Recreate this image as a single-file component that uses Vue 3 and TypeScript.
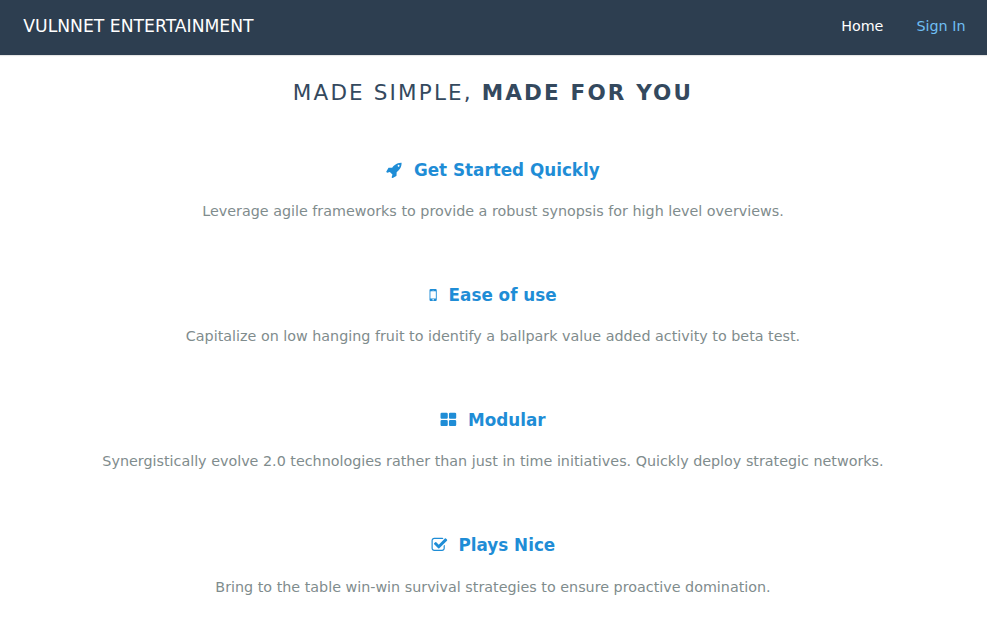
<script setup lang="ts">
interface Feature {
  title: string
  text: string
  viewBox: string
  width: number
  path: string
}

const features: Feature[] = [
  {
    title: 'Get Started Quickly',
    text: 'Leverage agile frameworks to provide a robust synopsis for high level overviews.',
    viewBox: '64 0 1664 1792',
    width: 15.7,
    path: 'M1440 448q0-40-28-68t-68-28-68 28-28 68 28 68 68 28 68-28 28-68zm224-288q0 249-75.5 430.5t-253.5 360.5q-81 80-195 176l-20 379q-2 16-16 26l-384 224q-7 4-16 4-12 0-23-9l-64-64q-13-14-8-32l85-276-281-281-276 85q-3 1-9 1-14 0-23-9l-64-64q-17-19-5-39l224-384q10-14 26-16l379-20q96-114 176-195 188-187 358-258t431-71q14 0 24 9.5t10 22.5z',
  },
  {
    title: 'Ease of use',
    text: 'Capitalize on low hanging fruit to identify a ballpark value added activity to beta test.',
    viewBox: '512 0 768 1792',
    width: 7.24,
    path: 'M976 1408q0-33-23.500-56.500t-56.500-23.500-56.500 23.500-23.500 56.500 23.500 56.500 56.500 23.500 56.500-23.500 23.500-56.500zm208-160v-704q0-13-9.500-22.500t-22.500-9.500h-512q-13 0-22.500 9.500t-9.500 22.500v704q0 13 9.500 22.500t22.500 9.500h512q13 0 22.500-9.500t9.500-22.500zm-192-848q0-16-16-16h-160q-16 0-16 16t16 16h160q16 0 16-16zm288-16v1024q0 52-38 90t-90 38h-512q-52 0-90-38t-38-90v-1024q0-52 38-90t90-38h512q52 0 90 38t38 90z',
  },
  {
    title: 'Modular',
    text: 'Synergistically evolve 2.0 technologies rather than just in time initiatives. Quickly deploy strategic networks.',
    viewBox: '64 0 1664 1792',
    width: 15.7,
    path: 'M832 1024v384q0 52-38 90t-90 38h-512q-52 0-90-38t-38-90v-384q0-52 38-90t90-38h512q52 0 90 38t38 90zm0-768v384q0 52-38 90t-90 38h-512q-52 0-90-38t-38-90v-384q0-52 38-90t90-38h512q52 0 90 38t38 90zm896 768v384q0 52-38 90t-90 38h-512q-52 0-90-38t-38-90v-384q0-52 38-90t90-38h512q52 0 90 38t38 90zm0-768v384q0 52-38 90t-90 38h-512q-52 0-90-38t-38-90v-384q0-52 38-90t90-38h512q52 0 90 38t38 90z',
  },
  {
    title: 'Plays Nice',
    text: 'Bring to the table win-win survival strategies to ensure proactive domination.',
    viewBox: '64 0 1664 1792',
    width: 15.7,
    path: 'M1472 930v318q0 119-84.500 203.500t-203.500 84.500h-832q-119 0-203.500-84.500t-84.500-203.500v-832q0-119 84.500-203.500t203.500-84.500h832q63 0 117 25 15 7 18 23 3 17-9 29l-49 49q-10 10-23 10-3 0-9-2-23-6-45-6h-832q-66 0-113 47t-47 113v832q0 66 47 113t113 47h832q66 0 113-47t47-113v-254q0-13 9-22l64-64q10-10 23-10 6 0 12 3 20 8 20 29zm231-489l-814 814q-24 24-57 24t-57-24l-430-430q-24-24-24-57t24-57l110-110q24-24 57-24t57 24l263 263 647-647q24-24 57-24t57 24l110 110q24 24 24 57t-24 57z',
  },
]
</script>

<template>
  <div class="page">
    <header class="bar">
      <a class="brand">VULNNET ENTERTAINMENT</a>
      <nav class="menu">
        <a class="link active">Home</a>
        <a class="link">Sign In</a>
      </nav>
    </header>
    <main class="content">
      <h2 class="head">Made simple, <strong>made for you</strong></h2>
      <section v-for="f in features" :key="f.title" class="feature">
        <h3 class="subhead">
          <svg class="icon" :viewBox="f.viewBox" :width="f.width" height="16.9" fill="currentColor">
            <path :d="f.path" />
          </svg>
          <span>{{ f.title }}</span>
        </h3>
        <p class="text">{{ f.text }}</p>
      </section>
    </main>
  </div>
</template>

<style>
body {
  background: #fff;
}
</style>

<style scoped>
.page {
  height: 617px;
  overflow: hidden;
  font-family: "DejaVu Sans", sans-serif;
  font-size: 14.325px;
  color: #7f8c8d;
}
.bar {
  display: flex;
  align-items: center;
  justify-content: space-between;
  box-sizing: border-box;
  height: 55px;
  padding: 0 21.5px 3px 23.3px;
  background: #2d3e50;
  box-shadow: 0 1px 1px rgba(0, 0, 0, 0.1);
}
.brand {
  font-size: 17.22px;
  color: #fff;
}
.menu {
  display: flex;
  gap: 33px;
}
.link {
  color: #6fbef3;
}
.active {
  color: #fff;
}
.content {
  padding-right: 1px;
  text-align: center;
}
.head {
  margin: 0;
  padding-top: 19px;
  line-height: 38px;
  text-transform: uppercase;
  font-size: 21.5px;
  font-weight: 400;
  letter-spacing: 0.1em;
  color: #34495e;
}
.head strong {
  font-weight: 700;
}
.feature {
  height: 125.12px;
}
.head + .feature {
  margin-top: 43px;
}
.subhead {
  display: flex;
  align-items: center;
  justify-content: center;
  gap: 12px;
  margin: 0;
  height: 30px;
  font-size: 16.79px;
  color: #1f8dd6;
}
.icon {
  flex: none;
  overflow: visible;
}
.icon path {
  transform: translate(55px, -50px);
}
.text {
  margin: 14.2px 0 0;
  line-height: 24px;
}
</style>
